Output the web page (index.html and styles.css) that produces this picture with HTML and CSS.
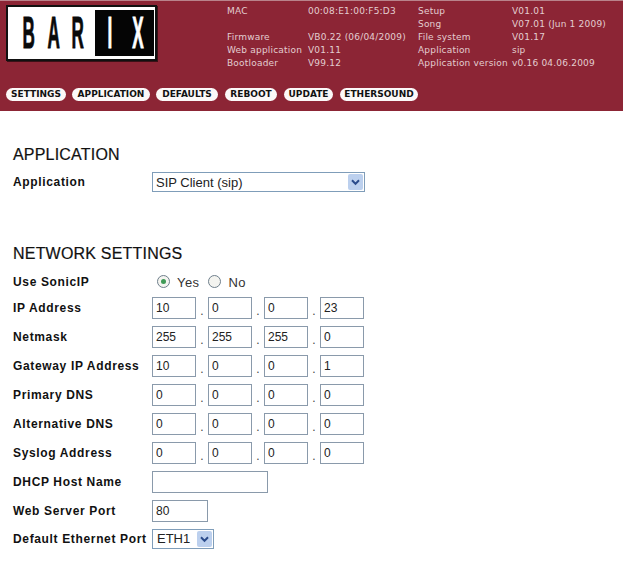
FILE: index.html
```html
<!DOCTYPE html>
<html lang="en">
<head>
<meta charset="utf-8">
<title>Barix</title>
<link rel="stylesheet" href="styles.css">
</head>
<body>
<header class="header">
  <div class="top">
    <div class="logo">
      <div class="logo-white"><span>B</span><span>A</span><span>R</span></div>
      <div class="logo-black"><span>I</span><span>X</span></div>
    </div>
    <div class="info">
      <span>MAC</span><span>00:08:E1:00:F5:D3</span><span>Setup</span><span>V01.01</span>
      <span></span><span></span><span>Song</span><span>V07.01 (Jun 1 2009)</span>
      <span>Firmware</span><span>VB0.22 (06/04/2009)</span><span>File system</span><span>V01.17</span>
      <span>Web application</span><span>V01.11</span><span>Application</span><span>sip</span>
      <span>Bootloader</span><span>V99.12</span><span>Application version</span><span>v0.16 04.06.2009</span>
    </div>
  </div>
  <nav class="nav">
    <a class="pill w-settings">SETTINGS</a>
    <a class="pill w-application">APPLICATION</a>
    <a class="pill w-defaults">DEFAULTS</a>
    <a class="pill w-reboot">REBOOT</a>
    <a class="pill w-update">UPDATE</a>
    <a class="pill w-ethersound">ETHERSOUND</a>
  </nav>
</header>
<main class="main">
  <h2 class="title">APPLICATION</h2>
  <div class="row app-row">
    <label class="label">Application</label>
    <div class="select wide">
      <span>SIP Client (sip)</span>
      <svg class="arrow" viewBox="0 0 17 17"><path d="M4.5 6.5 8.5 10.5 12.500 6.500" fill="none" stroke="#2b4c8c" stroke-width="2.200"/></svg>
    </div>
  </div>
  <h2 class="title second">NETWORK SETTINGS</h2>
  <div class="row sonic-row">
    <label class="label">Use SonicIP</label>
    <div class="radios">
      <span class="radio on"></span><span class="radio-text">Yes</span>
      <span class="radio"></span><span class="radio-text">No</span>
    </div>
  </div>
  <div class="row"><label class="label">IP Address</label><div class="ip"><input class="field octet" value="10"><i>.</i><input class="field octet" value="0"><i>.</i><input class="field octet" value="0"><i>.</i><input class="field octet" value="23"></div></div>
  <div class="row"><label class="label">Netmask</label><div class="ip"><input class="field octet" value="255"><i>.</i><input class="field octet" value="255"><i>.</i><input class="field octet" value="255"><i>.</i><input class="field octet" value="0"></div></div>
  <div class="row"><label class="label">Gateway IP Address</label><div class="ip"><input class="field octet" value="10"><i>.</i><input class="field octet" value="0"><i>.</i><input class="field octet" value="0"><i>.</i><input class="field octet" value="1"></div></div>
  <div class="row"><label class="label">Primary DNS</label><div class="ip"><input class="field octet" value="0"><i>.</i><input class="field octet" value="0"><i>.</i><input class="field octet" value="0"><i>.</i><input class="field octet" value="0"></div></div>
  <div class="row"><label class="label">Alternative DNS</label><div class="ip"><input class="field octet" value="0"><i>.</i><input class="field octet" value="0"><i>.</i><input class="field octet" value="0"><i>.</i><input class="field octet" value="0"></div></div>
  <div class="row"><label class="label">Syslog Address</label><div class="ip"><input class="field octet" value="0"><i>.</i><input class="field octet" value="0"><i>.</i><input class="field octet" value="0"><i>.</i><input class="field octet" value="0"></div></div>
  <div class="row"><label class="label">DHCP Host Name</label><input class="field host" value=""></div>
  <div class="row"><label class="label">Web Server Port</label><input class="field port" value="80"></div>
  <div class="row last-row"><label class="label">Default Ethernet Port</label>
    <div class="select narrow">
      <span>ETH1</span>
      <svg class="arrow" viewBox="0 0 17 17"><path d="M4.5 6.5 8.5 10.500 12.500 6.500" fill="none" stroke="#2b4c8c" stroke-width="2.200"/></svg>
    </div>
  </div>
</main>
</body>
</html>
```
FILE: styles.css
```css
html, body { margin: 0; padding: 0; background: #fff; }
body { font-family: "Liberation Sans", Arial, sans-serif; color: #111; width: 623px; height: 569px; overflow: hidden; }
.header { height: 111px; background: #8c2535; border-top: 1px solid #b9838b; box-sizing: border-box; padding: 4px 0 0 6px; }
.top { display: flex; height: 83px; }
.logo { width: 151px; height: 56px; box-sizing: border-box; border: 2px solid #111; background: #fff; box-shadow: 1px 1px 0 #3a1016; display: flex; align-items: center; padding: 0 2px 0 4px; }
.logo-white { display: flex; flex: none; box-sizing: border-box; width: 83px; padding-left: 3px; color: #0a0a0a; }
.logo-black { display: flex; flex: none; width: 59px; height: 46px; background: #050505; color: #fff; align-items: center; }
.logo span { display: block; flex: none; font: 700 45px/46px "Liberation Sans", Arial, sans-serif; -webkit-text-stroke: 1px currentColor; transform: scaleX(.38); text-align: center; }
.logo-white span { width: 24.5px; }
.logo-black span:first-child { width: 20px; margin-left: 5px; }
.logo-black span:last-child { width: 30px; margin-left: 3px; }
.info { margin: 0 0 0 70px; display: grid; grid-template-columns: 81px 110px 94px auto; grid-auto-rows: 13px; font: 9px/13px "DejaVu Sans", Verdana, sans-serif; letter-spacing: .2px; color: #e3cdd0; white-space: nowrap; }
.nav { display: flex; gap: 6px; }
.pill { display: block; height: 13px; box-sizing: border-box; background: #fbf8f8; color: #111; border-radius: 7px; font: 700 9px/13px "DejaVu Sans", Verdana, sans-serif; text-align: center; white-space: nowrap; overflow: hidden; }
.w-settings { width: 60px; }
.w-application { width: 78px; }
.w-defaults { width: 62px; }
.w-reboot { width: 52px; margin-left: 1px; }
.w-update { width: 49px; margin-left: 1px; }
.w-ethersound { width: 78px; margin-left: 1px; }
.main { padding: 34px 0 0 13px; }
.title { margin: 0; font: 400 16px/20px "Liberation Sans", Arial, sans-serif; letter-spacing: .2px; color: #111; -webkit-text-stroke: .2px #111; }
.second { margin-top: 50px; }
.row { display: flex; align-items: center; height: 29px; }
.app-row { height: 24px; margin-top: 5px; }
.sonic-row { margin-top: 5px; height: 24px; }
.sonic-row .label { padding-top: 1px; }
.last-row { margin-top: -1px; }
.label { width: 139px; flex: none; font: 700 12px/16px "Liberation Sans", Arial, sans-serif; letter-spacing: .65px; white-space: nowrap; color: #111; }
.field { box-sizing: border-box; height: 22px; border: 1px solid #8a9aab; background: #fff; padding: 0 3px; margin: 0; font: 12px "Liberation Sans", Arial, sans-serif; color: #222; outline: 0; }
.ip { display: flex; align-items: center; }
.ip i { width: 12px; font: normal 12px/16px "Liberation Sans", Arial, sans-serif; text-align: center; padding-top: 6px; color: #444; }
.octet { width: 44px; }
.host { width: 116px; }
.port { width: 56px; }
.select { box-sizing: border-box; height: 20px; border: 1px solid #7f9db9; display: flex; align-items: center; justify-content: space-between; padding: 0 1px 0 3px; font: 13px "Liberation Sans", Arial, sans-serif; color: #222; background: #fff; }
.wide { width: 213px; }
.narrow { width: 62px; padding-left: 4px; }
.arrow { width: 15px; height: 16px; background: #bcd0ee; border-radius: 2px; }
.radios { display: flex; align-items: center; padding-left: 5px; font-size: 13px; color: #333; }
.radio { box-sizing: border-box; width: 13px; height: 13px; border: 1px solid #6f7f8c; border-radius: 50%; background: #f4f4f0; position: relative; }
.radio.on::after { content: ""; position: absolute; left: 3px; top: 3px; width: 5px; height: 5px; border-radius: 50%; background: #3f9a56; }
.radio-text { margin: 2px 9px 0 7px; letter-spacing: .4px; }
```
